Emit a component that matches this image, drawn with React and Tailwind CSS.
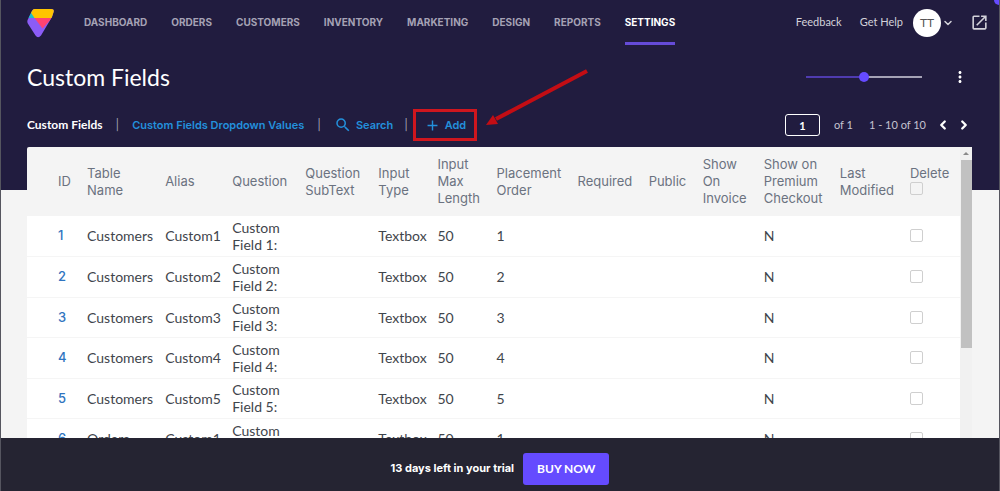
import { useState } from 'react';
import { ChevronDown, ChevronLeft, ChevronRight } from 'lucide-react';
import { MdAdd, MdMoreVert, MdOpenInNew, MdSearch } from 'react-icons/md';

const NAV = ['Dashboard', 'Orders', 'Customers', 'Inventory', 'Marketing', 'Design', 'Reports', 'Settings'];

const COLUMNS = [
  { label: ['ID'], width: 'w-[60px]' },
  { label: ['Table', 'Name'], width: 'w-[78px]' },
  { label: ['Alias'], width: 'w-[67px]' },
  { label: ['Question'], width: 'w-[73px]' },
  { label: ['Question', 'SubText'], width: 'w-[73px]' },
  { label: ['Input', 'Type'], width: 'w-[59px]' },
  { label: ['Input', 'Max', 'Length'], width: 'w-[59px]' },
  { label: ['Placement', 'Order'], width: 'w-[81px]' },
  { label: ['Required'], width: 'w-[71px]' },
  { label: ['Public'], width: 'w-[54px]' },
  { label: ['Show', 'On', 'Invoice'], width: 'w-[61px]' },
  { label: ['Show on', 'Premium', 'Checkout'], width: 'w-[76px]' },
  { label: ['Last', 'Modified'], width: 'w-[70px]' },
];

const ROWS = [
  { id: 1, table: 'Customers', alias: 'Custom1', field: 1, order: 1 },
  { id: 2, table: 'Customers', alias: 'Custom2', field: 2, order: 2 },
  { id: 3, table: 'Customers', alias: 'Custom3', field: 3, order: 3 },
  { id: 4, table: 'Customers', alias: 'Custom4', field: 4, order: 4 },
  { id: 5, table: 'Customers', alias: 'Custom5', field: 5, order: 5 },
  { id: 6, table: 'Orders', alias: 'Custom1', field: 1, order: 1 },
];

function Logo() {
  return (
    <svg width="27" height="30" viewBox="0 0 27 30" aria-label="Home">
      <defs>
        <clipPath id="gem">
          <path d="M7.500 1H24.500Q27.500 1 26.600 4L25 9L14 27.500Q11 31 8.500 27.500L0.800 15.500Q-0.200 13.500 0.800 11.500L5 3Q6 1 7.500 1Z" />
        </clipPath>
      </defs>
      <g clipPath="url(#gem)">
        <path d="M0 0H27V30H0Z" fill="#8b5cf6" />
        <path d="M4 3L0 10H8Z" fill="#1bbfc9" />
        <path d="M7.500 10H25L15.500 20.500Z" fill="#ff4371" />
        <path d="M3.500 4L5 0H27V10H7.500Z" fill="#ffc400" />
      </g>
    </svg>
  );
}

const Checkbox = ({ label }) => (
  <input
    type="checkbox"
    aria-label={label}
    className="block size-[13px] appearance-none rounded-[2px] border border-[#cfcfcf] bg-transparent checked:bg-[#654bff]"
  />
);

function Header() {
  const [zoom, setZoom] = useState(50);
  const [page, setPage] = useState('1');

  return (
    <header className="h-[190px] shrink-0 bg-[#211c3f] pl-[26px] text-white">
      <div className="flex h-[45px] items-center pr-[10px]">
        <a href="#home"><Logo /></a>
        <nav className="ml-[30px] flex gap-6 self-stretch font-[Inter] text-[10px] font-bold uppercase">
          {NAV.map((item) => (
            <a
              key={item}
              href={`#${item.toLowerCase()}`}
              className={
                item === 'Settings'
                  ? 'flex items-center border-y-[3px] border-t-transparent border-b-[#654bd8] text-white'
                  : 'flex items-center text-[#a5a2b5]'
              }
            >
              {item}
            </a>
          ))}
        </nav>
        <div className="ml-auto flex items-center text-[11px] text-[#d3d2da]">
          <a href="#feedback">Feedback</a>
          <a href="#help" className="ml-[18px]">Get Help</a>
          <button className="ml-[10px] flex items-center gap-px">
            <span className="flex size-7 items-center justify-center rounded-full bg-white text-[12px] text-[#555]">TT</span>
            <ChevronDown size={12} strokeWidth={3} />
          </button>
          <a href="#store" aria-label="Open store" className="ml-4"><MdOpenInNew size={19} /></a>
        </div>
      </div>

      <div className="flex h-16 items-center pr-[30px]">
        <h1 className="text-[23px]">Custom Fields</h1>
        <input
          type="range"
          aria-label="Row density"
          value={zoom}
          onChange={(e) => setZoom(e.target.value)}
          className="ml-auto h-[2px] w-[116px] appearance-none bg-linear-to-r from-[#4f3bb0] from-50% to-[#a5a2b5] to-50% [&::-webkit-slider-thumb]:size-[10px] [&::-webkit-slider-thumb]:appearance-none [&::-webkit-slider-thumb]:rounded-full [&::-webkit-slider-thumb]:bg-[#654bff]"
        />
        <button aria-label="More actions" className="ml-[29px]"><MdMoreVert size={18} /></button>
      </div>

      <div className="flex h-8 items-center pr-[28px] font-[Inter] text-[11px] font-semibold text-[#2390dc]">
        <span className="font-[Lato] text-[12px] font-bold text-white">Custom Fields</span>
        <span className="mx-[13px] font-normal text-[#a5a2b5]">|</span>
        <a href="#dropdown">Custom Fields Dropdown Values</a>
        <span className="mx-[13px] font-normal text-[#a5a2b5]">|</span>
        <button className="flex items-center gap-1"><MdSearch size={18} />Search</button>
        <span className="ml-[11px] font-normal text-[#a5a2b5]">|</span>
        <div className="relative ml-[5px]">
          <button className="flex h-8 w-16 items-center justify-center gap-1 border-3 border-[#d0161e]">
            <MdAdd size={17} />Add
          </button>
          <svg className="pointer-events-none absolute -top-10 left-[73px]" width="104" height="60" viewBox="0 0 104 60">
            <path d="M101 2L10 50" stroke="#c30d14" strokeWidth="4" />
            <path d="M0 56L7 46L12 55Z" fill="#c30d14" />
          </svg>
        </div>
        <div className="ml-auto flex items-center font-[Lato] text-[11px] font-normal text-[#c5c3d0]">
          <input
            aria-label="Page"
            value={page}
            onChange={(e) => setPage(e.target.value)}
            className="h-[22px] w-[35px] rounded-[3px] border border-white text-center font-bold text-white"
          />
          <span className="ml-[14px]">of 1</span>
          <span className="ml-4">1 - 10 of 10</span>
          <button aria-label="Previous page" className="ml-[10px] text-white"><ChevronLeft size={14} strokeWidth={4} /></button>
          <button aria-label="Next page" className="ml-[7px] text-white"><ChevronRight size={14} strokeWidth={4} /></button>
        </div>
      </div>
    </header>
  );
}

function FieldsTable() {
  return (
    <table className="w-full table-fixed text-left text-[14px] leading-[17px] text-[#3f454c]">
      <thead className="bg-[#f4f4f4] font-[Inter] text-[13px] text-[#6b7280]">
        <tr className="h-[69px]">
          {COLUMNS.map((col, i) => (
            <th key={i} className={`${col.width} p-0 font-normal ${i === 0 ? 'pl-[31px]' : ''}`}>
              {col.label.map((line) => (
                <span key={line} className="block">{line}</span>
              ))}
            </th>
          ))}
          <th className="w-[50px] p-0 pb-1 font-normal">
            Delete
            <Checkbox label="Delete all" />
          </th>
        </tr>
      </thead>
      <tbody className="bg-white">
        {ROWS.map((row) => (
          <tr key={row.id} className="border-b border-[#f5f5f5] odd:h-10 even:h-[41px]">
            <td className="pl-[31px] font-[Inter] text-[13px] font-medium">
              <a href={`#field-${row.id}`} className="text-[#2f74c0]">{row.id}</a>
            </td>
            <td>{row.table}</td>
            <td>{row.alias}</td>
            <td className="pr-4">{`Custom Field ${row.field}:`}</td>
            <td></td>
            <td>Textbox</td>
            <td>50</td>
            <td>{row.order}</td>
            <td></td>
            <td></td>
            <td></td>
            <td>N</td>
            <td></td>
            <td><Checkbox label={`Delete field ${row.id}`} /></td>
          </tr>
        ))}
      </tbody>
    </table>
  );
}

export default function App() {
  return (
    <div className="relative flex h-screen flex-col overflow-hidden border-r border-l border-[#55555f] bg-[#f4f4f4] font-[Lato,sans-serif]">
      <Header />

      <main className="relative -mt-[43px] flex min-h-0 flex-1 pr-[27px] pl-[26px]">
        <div className="min-w-0 flex-1 overflow-hidden rounded-tl-[2px]">
          <FieldsTable />
        </div>
        {/* scroll bar */}
        <div className="flex w-3 shrink-0 flex-col items-center bg-[#f1f1f1]">
          <svg className="my-1 shrink-0" width="6" height="5" viewBox="0 0 6 5"><path d="M0 4L3 1L6 4Z" fill="#8a8a8a" /></svg>
          <div className="h-[188px] w-[11px] shrink-0 bg-[#c1c1c1]" />
        </div>
      </main>

      <footer className="relative flex h-[53px] shrink-0 items-center justify-center gap-[9px] bg-[#252432] pt-2 text-white">
        <span className="font-[Inter] text-[11px] font-bold">13 days left in your trial</span>
        <button className="h-8 rounded-[3px] bg-[#654bff] px-[14px] text-[12px] font-bold">BUY NOW</button>
      </footer>

      <span className="absolute top-0 right-0 size-[5px] rounded-bl-full bg-[#654bff]" />
    </div>
  );
}
